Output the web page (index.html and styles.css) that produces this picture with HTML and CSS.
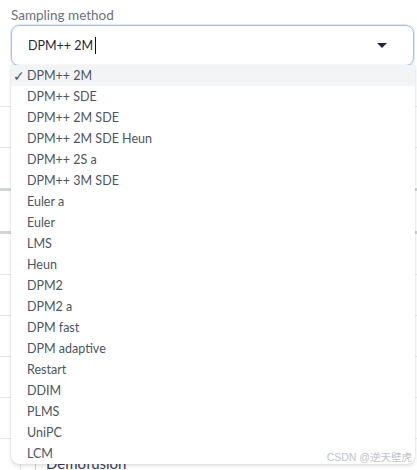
FILE: index.html
```html
<html>
<head>
<meta charset="utf-8">
<link rel="stylesheet" href="styles.css">
</head>
<body>
<div class="panel">
  <label class="fieldLabel">Sampling method</label>
  <div class="selectWrap">
    <div class="selectBox">
      <span class="selectValue">DPM++ 2M</span><span class="caret"></span>
      <svg class="arrow" width="10" height="6" viewBox="0 0 10 6"><path d="M0 0 L10 0 L5 5 Z" fill="#1f2937"/></svg>
    </div>
    <ul class="options" id="options"></ul>
  </div>
  <div class="behind">
    <div class="row"></div>
    <div class="row"></div>
    <div class="row box"></div>
    <div class="row box"></div>
    <div class="row"></div>
    <div class="row"></div>
    <div class="row"></div>
    <div class="row"></div>
    <div class="row"></div>
    <div class="demoRow"><div class="demo">Demofusion</div></div>
  </div>
</div>
<div class="watermark">CSDN @逆天壁虎</div>
<script>
const samplers = ['DPM++ 2M','DPM++ SDE','DPM++ 2M SDE','DPM++ 2M SDE Heun','DPM++ 2S a','DPM++ 3M SDE','Euler a','Euler','LMS','Heun','DPM2','DPM2 a','DPM fast','DPM adaptive','Restart','DDIM','PLMS','UniPC','LCM'];
const options = document.querySelector('#options');
options.innerHTML = samplers.map((s, i) => `<li class="option${i === 0 ? ' selected' : ''}"><span class="check">${i === 0 ? '✓' : ''}</span>${s}</li>`).join('');
</script>
</body>
</html>
```
FILE: styles.css
```css
body{
    margin: 0;
    background: #fff;
    font-family: "Lato", "Noto Sans", sans-serif;
    overflow: hidden;
    height: 470px;
}
.panel{
    padding: 6px 3px 0 11px;
}
.fieldLabel{
    display: block;
    font-size: 13.5px;
    color: #6b7280;
    line-height: 18px;
}
.selectWrap{
    position: relative;
    margin-top: 1px;
}
.selectBox{
    display: flex;
    align-items: center;
    height: 39px;
    border: 1px solid #93c5fd;
    border-radius: 8px;
    padding: 0 0 0 16px;
    box-shadow: 0 0 0 1px #dbeafe;
    font-size: 12.5px;
    color: #1f2937;
}
.caret{
    display: inline-block;
    width: 1px;
    height: 17px;
    background: #111;
    margin-left: 2px;
}
.arrow{
    margin-left: auto;
    margin-right: 26px;
}
.options{
    position: absolute;
    top: 40px;
    left: 0;
    width: 404px;
    margin: 0;
    padding: 0;
    list-style: none;
    background: #fff;
    border-radius: 0 0 8px 8px;
    box-shadow: 0 2px 4px rgba(0,0,0,0.12), 0 0 1px rgba(0,0,0,0.2);
    z-index: 2;
}
.option{
    display: flex;
    align-items: center;
    height: 21px;
    font-size: 12.5px;
    color: #4b5563;
}
.option.selected{
    background: #f3f4f6;
}
.check{
    width: 14px;
    padding-left: 2px;
    font-size: 13.5px;
    line-height: 14px;
}
.behind{
    margin-left: -11px;
    margin-right: -3px;
}
.row{
    height: 40px;
    border-bottom: 1px solid #e5e7eb;
}
.row.box{
    border-bottom: 3px solid #d1d5db;
}
.demoRow{
    margin-top: 16px;
    margin-left: 20px;
    border-left: 1px solid #e5e7eb;
    padding-left: 14px;
}
.demo{
    border-left: 1px solid #d1d5db;
    padding-left: 10px;
    font-size: 15px;
    line-height: 16px;
    color: #374151;
}
.watermark{
    position: absolute;
    right: 5px;
    bottom: 6px;
    font-size: 10.5px;
    color: #c0c4cc;
    z-index: 3;
    font-family: "Liberation Sans", "Noto Sans CJK SC", sans-serif;
}
```
